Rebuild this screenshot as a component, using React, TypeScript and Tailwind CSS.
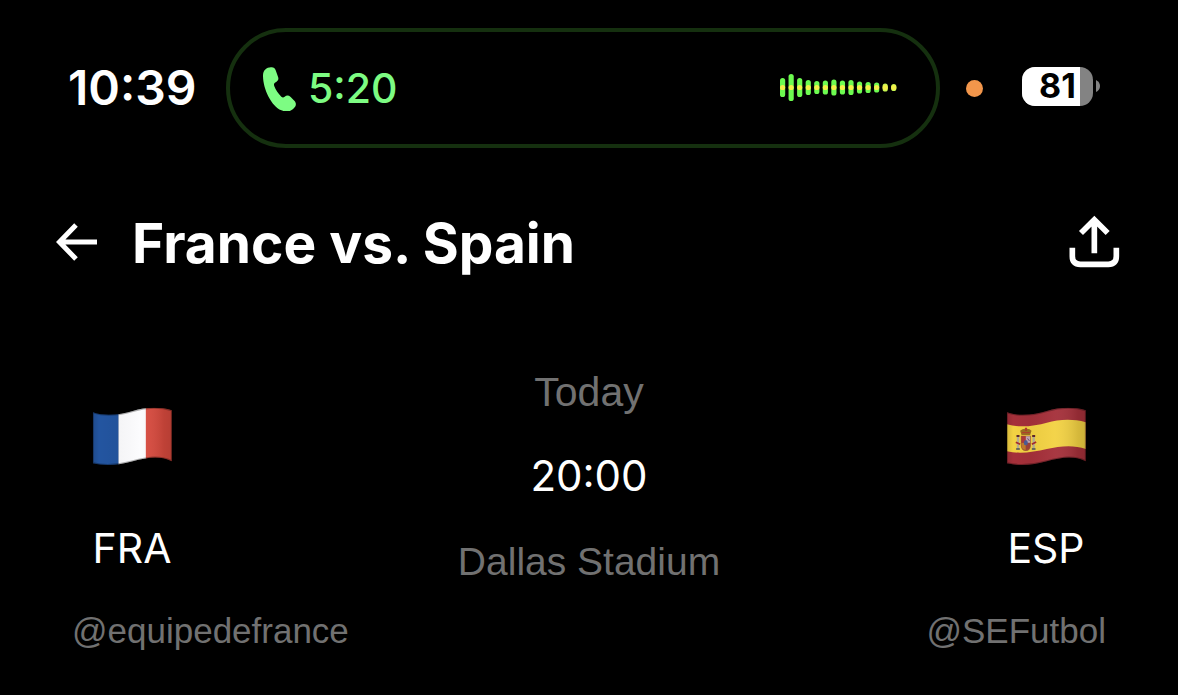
import { useId } from 'react'

// bar heights of the call's voice level
const LEVELS = [19, 27, 19, 15, 13, 14, 16, 14, 15, 12, 11, 10, 8, 7]

function PhoneIcon() {
  return (
    <svg viewBox="668 139 99 135" className="w-[33px] h-[45px]" fill="#7dfc83" aria-hidden="true">
      <path d="M668 168C668 151 680 142 694 143C700 143 704 146 706 152L713 171C716 179 713 184 706 188C701 191 700 194 702 200C706 211 714 223 723 231C726 234 730 234 733 231C739 226 745 227 751 232L762 243C768 249 768 257 763 263C753 276 739 279 723 272C693 259 668 208 668 168Z" />
    </svg>
  )
}

function Waveform() {
  return (
    <svg viewBox="0 0 117 28" className="w-[117px] h-7" aria-hidden="true">
      {LEVELS.map((h, i) => (
        <g key={i}>
          <rect x={i * 8.55} y={13.5 - h / 2} width="5.2" height={h} rx="2.6" fill={i > 11 ? '#c8f651' : '#6dfb50'} />
          <circle cx={i * 8.55 + 2.6} cy="13.5" r="2.6" fill="#f3f04a" />
        </g>
      ))}
    </svg>
  )
}

function BackIcon() {
  return (
    <svg viewBox="0 0 42 38" className="w-[42px] h-[38px]" fill="none" stroke="#fff" strokeWidth="5" aria-hidden="true">
      <path d="M20 2L3.500 19L20 36M4 19H41" />
    </svg>
  )
}

function ShareIcon() {
  return (
    <svg viewBox="56 47 153 159" className="w-[51px] h-[53px] overflow-visible" fill="none" stroke="#fff" strokeWidth="17" aria-hidden="true">
      <path d="M132 60V159M92 98L132 58L172 98" />
      <path d="M66 142V168Q66 192 90 192H174Q198 192 198 168V142" />
    </svg>
  )
}

const CLOTH = 'M40 52C80 66 125 58 160 48S235 34 277 46V199C240 180 200 188 160 199S80 214 40 205Z'

function Flag({ country }: { country: 'fr' | 'es' }) {
  const id = useId()
  return (
    <svg viewBox="36 36 243 174" className="w-[82px] h-[58px]" role="img" aria-label={country === 'fr' ? 'France' : 'Spain'}>
      <defs>
        <clipPath id={`${id}-clip`}>
          <path d={CLOTH} />
        </clipPath>
        <linearGradient id={`${id}-shade`} x1="0" x2="1" y1="0" y2="0">
          <stop offset="0" stopColor="#000" stopOpacity="0.12" />
          <stop offset="0.08" stopColor="#000" stopOpacity="0" />
          <stop offset="0.3" stopColor="#000" stopOpacity="0.03" />
          <stop offset="0.6" stopColor="#fff" stopOpacity="0.04" />
          <stop offset="0.9" stopColor="#000" stopOpacity="0.12" />
          <stop offset="1" stopColor="#000" stopOpacity="0.16" />
        </linearGradient>
      </defs>
      <g clipPath={`url(#${id}-clip)`}>
        {country === 'fr' ? (
          <>
            <rect x="38" y="36" width="80" height="174" fill="#2355a0" />
            <rect x="117" y="36" width="83" height="174" fill="#fcfcfe" />
            <rect x="199" y="36" width="82" height="174" fill="#d94a3e" />
          </>
        ) : (
          <>
            <rect x="38" y="36" width="243" height="174" fill="#a5303a" />
            <path d="M40 88C80 100 125 92 160 83S235 70 277 82V162C240 149 200 153 160 162S80 178 40 169Z" fill="#f3d243" />
            <Arms />
          </>
        )}
        <path d={CLOTH} fill={`url(#${id}-shade)`} />
        <path d={CLOTH} fill="none" stroke="#000" strokeOpacity="0.3" strokeWidth="6" />
      </g>
    </svg>
  )
}

function Arms() {
  return (
    <g>
      <path d="M84 120L80 107Q89 100 97 102Q107 100 114 107L110 120Z" fill="#9c7022" />
      <path d="M96 99H99V106H96ZM85 113H109" stroke="#b83a31" strokeWidth="3" />
      <rect x="70" y="125" width="7" height="36" fill="#b6ae91" />
      <rect x="117" y="125" width="7" height="36" fill="#b6ae91" />
      <path d="M69 120H78V126H69ZM116 120H125V126H116Z" fill="#5f262b" />
      <path d="M67 142L80 148M115 148L128 141" stroke="#a62b30" strokeWidth="5" />
      <path d="M68 162H79M115 162H126" stroke="#46505f" strokeWidth="5" />
      <path d="M82 122H112V153Q110 168 97 168Q84 168 82 153Z" fill="#a45a31" />
      <path d="M84 124H97V143H84Z" fill="#b03a3a" />
      <path d="M97 124H110V143H97Z" fill="#c3a8b5" />
      <path d="M84 144H97V165Q85 163 84 153Z" fill="#c27b2c" />
      <path d="M97 144H110V153Q109 163 97 165Z" fill="#9f4338" />
      <ellipse cx="97" cy="143" rx="6" ry="8" fill="#4d5d95" />
      <path d="M102 130L108 138" stroke="#725279" strokeWidth="3" />
    </g>
  )
}

function Battery() {
  return (
    <div className="mb-1 flex items-center gap-[3px]">
      <div className="relative flex h-[39px] w-[71px] overflow-hidden rounded-[13px] bg-[#838383]">
        <div className="w-[58px] bg-white" />
        <span className="absolute inset-0 flex items-center justify-center text-[34px] leading-none font-bold text-black">81</span>
      </div>
      <svg viewBox="0 0 4 12" className="w-1 h-3" fill="#838383" aria-hidden="true">
        <path d="M0 0Q4 2 4 6T0 12Z" />
      </svg>
    </div>
  )
}

function StatusBar() {
  return (
    <div className="flex items-center pl-[68px] pr-[78px] pt-7">
      <span className="w-[158px] shrink-0 text-[48px] leading-[60px] font-semibold">10:39</span>
      <div className="flex h-[120px] flex-1 items-center justify-between rounded-full border-4 border-[#15300f] pl-[33px] pr-[39px]">
        <div className="flex items-center gap-3 text-[#7dfc83]">
          <PhoneIcon />
          <span className="text-[41px] leading-[48px] font-medium">5:20</span>
        </div>
        <Waveform />
      </div>
      <span className="ml-[26px] mr-[39px] size-[17px] shrink-0 rounded-full bg-[#f2964b]" />
      <Battery />
    </div>
  )
}

function TitleBar() {
  return (
    <header className="flex items-center pl-14 pr-[58px] pt-[59px]">
      <button type="button" aria-label="Back">
        <BackIcon />
      </button>
      <h1 className="ml-[34px] flex-1 pt-0.5 text-[55px] leading-[68px] font-bold">France vs. Spain</h1>
      <button type="button" aria-label="Share">
        <ShareIcon />
      </button>
    </header>
  )
}

function Team({ country, code, handle, side }: { country: 'fr' | 'es'; code: string; handle: string; side: 'left' | 'right' }) {
  return (
    <div className={side === 'left' ? 'flex flex-col items-start' : 'flex flex-col items-end'}>
      <div className="flex w-[120px] flex-col items-center pt-[41px]">
        <Flag country={country} />
        <span className="mt-[57px] text-[41px] leading-[52px]">{code}</span>
      </div>
      <a href="#" className="mt-[35px] font-['Liberation_Sans',sans-serif] text-[35px] leading-[44px] text-[#717171]">{handle}</a>
    </div>
  )
}

export default function App() {
  return (
    <main className="min-h-screen bg-black font-['Inter',sans-serif] text-white">
      <StatusBar />
      <TitleBar />
      <section className="grid grid-cols-[1fr_auto_1fr] px-[72px] pt-[89px]">
        <Team country="fr" code="FRA" handle="@equipedefrance" side="left" />
        <div className="flex flex-col items-center text-center">
          <span className="font-['Liberation_Sans',sans-serif] text-[41px] leading-[52px] text-[#717171]">Today</span>
          <time className="mt-8 text-[42px] leading-[52px]">20:00</time>
          <span className="mt-[34px] font-['Liberation_Sans',sans-serif] text-[39px] leading-[52px] text-[#717171]">Dallas Stadium</span>
        </div>
        <Team country="es" code="ESP" handle="@SEFutbol" side="right" />
      </section>
    </main>
  )
}
